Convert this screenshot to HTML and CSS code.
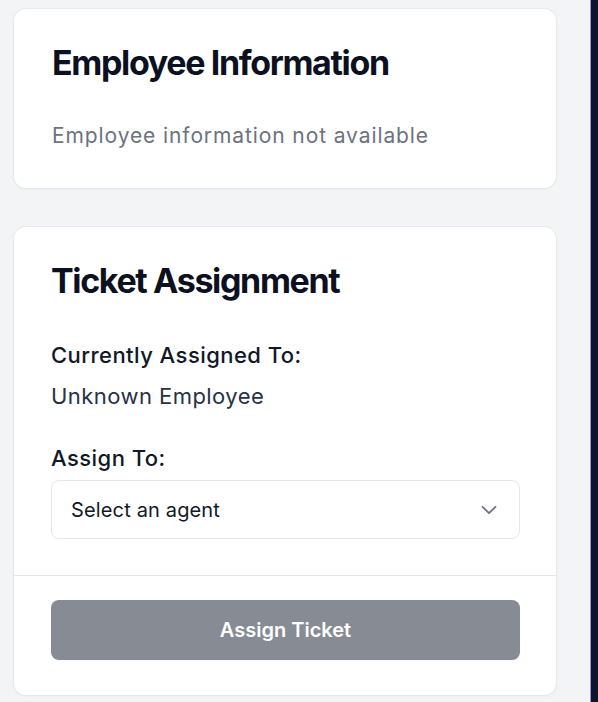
FILE: index.html
```html
<!DOCTYPE html>
<html lang="en">
<head>
<meta charset="utf-8">
<title>Ticket</title>
<link rel="stylesheet" href="styles.css">
</head>
<body>
<div class="layout">
  <main class="main">
    <section class="card card-info">
      <h2 class="card-title">Employee Information</h2>
      <p class="muted">Employee information not available</p>
    </section>
    <section class="card card-assign">
      <div class="card-body">
        <h2 class="card-title">Ticket Assignment</h2>
        <div class="label label-current">Currently Assigned To:</div>
        <div class="value">Unknown Employee</div>
        <div class="label label-assign">Assign To:</div>
        <div class="select">
          <span class="select-text">Select an agent</span>
          <svg class="chevron" width="16" height="10" viewBox="0 0 16 10" fill="none" stroke="currentColor" stroke-width="1.8" stroke-linecap="round" stroke-linejoin="round"><path d="M1.5 1.8 8 8.2 14.5 1.8"/></svg>
        </div>
      </div>
      <div class="card-footer">
        <button class="btn" type="button">Assign Ticket</button>
      </div>
    </section>
  </main>
  <aside class="side"></aside>
</div>
</body>
</html>
```

FILE: styles.css
```css
* { box-sizing: border-box; }
html, body { margin: 0; padding: 0; height: 100%; }
body {
  background: #f3f4f6;
  font-family: Inter, "Noto Sans", sans-serif;
  color: #111827;
  overflow: hidden;
}
.layout { display: flex; height: 702px; }
.main {
  flex: 1;
  padding: 9px 34px 0 14px;
  display: flex;
  flex-direction: column;
  gap: 39px;
}
.side {
  width: 8px;
  background: #0f1629;
  border-left: 1px solid #9d8ce8;
}
.card {
  background: #fff;
  border-radius: 12px;
  box-shadow: 0 0 0 1px rgba(229,231,235,.7), 0 1px 3px rgba(0,0,0,.06);
}
.card-info { padding: 34px 38px 38px; }
.card-title {
  margin: 0;
  font-size: 34px;
  line-height: 40px;
  font-weight: 700;
  letter-spacing: -0.04em;
  color: #0b1120;
}
.muted {
  margin: 39px 0 0;
  font-size: 21px;
  line-height: 28px;
  letter-spacing: 0.9px;
  color: #6b7280;
}
.card-body { padding: 34px 36px 36px 37px; }
.label {
  font-size: 22px;
  line-height: 28px;
  font-weight: 500;
  letter-spacing: 0.45px;
  color: #111827;
}
.label-current { margin-top: 40px; }
.label-assign { margin-top: 34px; }
.value {
  margin-top: 13px;
  font-size: 22px;
  line-height: 28px;
  letter-spacing: 0.45px;
  color: #273244;
}
.select {
  margin-top: 8px;
  height: 59px;
  border: 1px solid #e5e7eb;
  border-radius: 8px;
  display: flex;
  align-items: center;
  justify-content: space-between;
  padding: 0 22px 0 19px;
}
.select-text { font-size: 20px; letter-spacing: 0.15px; color: #111827; }
.chevron { color: #6b7280; }
.card-footer {
  border-top: 1px solid #e5e7eb;
  padding: 24px 36px 35px 37px;
}
.btn {
  display: block;
  width: 100%;
  height: 60px;
  border: 0;
  border-radius: 8px;
  background: #878b94;
  color: #fff;
  font-family: Inter, "Noto Sans", sans-serif;
  font-size: 20px;
  font-weight: 600;
}
```
